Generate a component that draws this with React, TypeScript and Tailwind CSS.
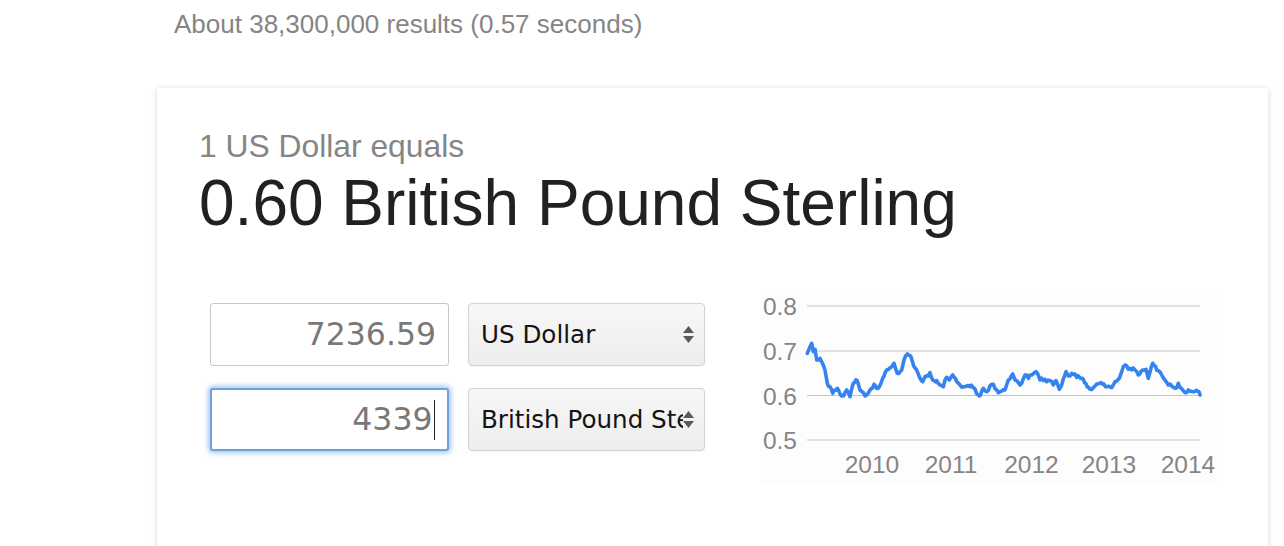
import React from 'react'

// rough trace of the USD/GBP line, in page coordinates
const points: [number, number][] = [
  [807.3, 353.3], [809.3, 348.3], [811.7, 343.3], [813.3, 351.7], [815, 349.3], [816.7, 360], [820, 358.3],
  [821.7, 361.7], [825, 370], [827.3, 383.3], [830, 386.7], [832.7, 393.3], [837.3, 388.3], [841.7, 396],
  [846.7, 390], [850, 396.7], [853.3, 383.3], [857.3, 380.7], [860, 390], [865, 396], [870, 390], [874, 384.3],
  [878.3, 388.3], [882.7, 378.3], [886.7, 370], [891.7, 366.7], [894, 363.3], [897.3, 373.3], [901.7, 370],
  [904, 360], [907.3, 354], [910.7, 356], [914, 366.7], [916.7, 370], [920, 378.3], [922.7, 381.7], [925, 376.7],
  [930, 372.7], [932.7, 380], [936.7, 380.7], [940, 385], [943.3, 386.7], [946.7, 377.3], [949.3, 380],
  [952.7, 375], [956.7, 381.7], [960, 385], [965, 386.7], [970, 386.7], [974, 388], [979.3, 396], [983.3, 388.3],
  [986.7, 391.7], [991.7, 384.3], [996.7, 390], [1000, 391.7], [1005, 390], [1008.3, 380], [1012.7, 374],
  [1015, 380], [1020, 385], [1025, 375], [1028.3, 378.3], [1031.7, 375], [1036, 371.7], [1040, 380],
  [1045, 379.3], [1050, 380.7], [1053.3, 385], [1056, 380.7], [1059.3, 389.3], [1061.7, 385], [1066, 371.7],
  [1068.3, 376], [1071.7, 373.3], [1076.7, 377.3], [1083.3, 379.3], [1090, 389.3], [1095, 386], [1100, 383.3],
  [1106.7, 386.7], [1111.7, 387.7], [1115, 381.7], [1119.3, 378.3], [1121.7, 371.7], [1125, 365], [1130, 368.3],
  [1135, 370], [1138.3, 375], [1142.7, 370], [1146, 369.3], [1148.3, 378.3], [1152.7, 363.3], [1156.7, 370],
  [1161.7, 375], [1165, 380], [1168.3, 385], [1171.7, 386], [1175, 388.3], [1178.3, 383.3], [1182.7, 390],
  [1185, 392.7], [1188.3, 390], [1193.3, 391.7], [1199, 391.7], [1200, 395],
]

// add some day-to-day noise between traced points
function jagged(pts: [number, number][]) {
  const out: string[] = []
  pts.forEach(([x, y], i) => {
    out.push(`${x},${y}`)
    const next = pts[i + 1]
    if (!next) return
    const steps = Math.max(1, Math.floor((next[0] - x) / 1.3))
    for (let s = 1; s < steps; s++) {
      const t = s / steps
      const jx = x + (next[0] - x) * t
      const jy = y + (next[1] - y) * t + Math.sin(jx * 4.3) * 1.3 + Math.sin(jx * 1.7) * 0.8
      out.push(`${jx.toFixed(1)},${jy.toFixed(1)}`)
    }
  })
  return out.join(' ')
}

const gridLines = [
  { y: 306, label: '0.8' },
  { y: 351, label: '0.7' },
  { y: 395.5, label: '0.6' },
  { y: 440, label: '0.5' },
]

const years = [
  { x: 872, label: '2010' },
  { x: 951, label: '2011' },
  { x: 1031.5, label: '2012' },
  { x: 1109, label: '2013' },
  { x: 1188, label: '2014' },
]

function Arrows() {
  return (
    <svg width="11" height="17" viewBox="0 0 11 17" className="shrink-0">
      <path d="M5.5 0 L11 7 L0 7 Z" fill="#5a5a5a" />
      <path d="M0 10 L11 10 L5.5 17 Z" fill="#5a5a5a" />
    </svg>
  )
}

function CurrencySelect({ label }: { label: string }) {
  return (
    <div className="flex h-[63px] w-[237px] items-center rounded-[4px] border border-[#d3d3d3] bg-gradient-to-b from-[#f7f7f7] to-[#ededed] pl-[12px] pr-[10px] shadow-[0_1px_1px_rgba(0,0,0,0.04)]">
      <span className="flex-1 overflow-hidden whitespace-nowrap font-['DejaVu_Sans',sans-serif] text-[24.6px] leading-[30px] text-[#141414]">
        {label}
      </span>
      <Arrows />
    </div>
  )
}

function Chart() {
  return (
    <svg width="458" height="190" viewBox="760 295 458 190" className="block">
      <rect x="760" y="295" width="458" height="190" fill="#fdfdfd" />
      {gridLines.map((g) => (
        <g key={g.label}>
          <line x1="807" x2="1200" y1={g.y} y2={g.y} stroke="#c4c4c4" strokeWidth="1.2" />
          <text
            x="797"
            y={g.y + 9}
            textAnchor="end"
            fontFamily="'Liberation Sans', Arial, sans-serif"
            fontSize="24.5"
            fill="#858585"
          >
            {g.label}
          </text>
        </g>
      ))}
      {years.map((yr) => (
        <text
          key={yr.label}
          x={yr.x}
          y="472.5"
          textAnchor="middle"
          fontFamily="'Liberation Sans', Arial, sans-serif"
          fontSize="24.5"
          fill="#858585"
        >
          {yr.label}
        </text>
      ))}
      <polyline
        points={jagged(points)}
        fill="none"
        stroke="#3483ee"
        strokeWidth="3.6"
        strokeLinejoin="round"
        strokeLinecap="round"
      />
    </svg>
  )
}

export default function App() {
  return (
    <div className="h-[546px] w-[1284px] overflow-hidden bg-white font-['Liberation_Sans',Arial,sans-serif]">
      <div className="pl-[174px] pt-[11px] text-[26px] leading-[26px] text-[#858585]">
        About 38,300,000 results (0.57 seconds)
      </div>

      <div className="ml-[157px] mt-[51px] h-[480px] w-[1111px] bg-white pl-[42px] pt-[42px] shadow-[0_1px_6px_rgba(0,0,0,0.16)]">
        <div className="text-[31.8px] leading-[32px] text-[#858585]">1 US Dollar equals</div>
        <div className="mt-[9px] text-[64px] leading-[64px] text-[#212121]">0.60 British Pound Sterling</div>

        <div className="mt-[60px] flex items-start pl-[11px]">
          {/* converter inputs */}
          <div className="mt-[8px] flex flex-col gap-[22px]">
            <div className="flex gap-[19px]">
              <div className="flex h-[63px] w-[239px] items-center justify-end rounded-[3px] border border-[#c8c8c8] bg-white pr-[12px] font-['DejaVu_Sans',sans-serif] text-[31.5px] text-[#787878]">
                7236.59
              </div>
              <CurrencySelect label="US Dollar" />
            </div>
            <div className="flex gap-[19px]">
              <div className="flex h-[63px] w-[239px] items-center justify-end rounded-[3px] border-2 border-[#6ea1e0] bg-white pr-[12px] font-['DejaVu_Sans',sans-serif] text-[31.5px] text-[#787878] shadow-[0_0_5px_2px_rgba(105,160,228,0.6)]">
                4339
                <span className="ml-px inline-block h-[40px] w-[1.5px] bg-[#222]" />
              </div>
              <CurrencySelect label="British Pound Sterling" />
            </div>
          </div>

          {/* rate history chart */}
          <div className="ml-[55px]">
            <Chart />
          </div>
        </div>
      </div>
    </div>
  )
}
